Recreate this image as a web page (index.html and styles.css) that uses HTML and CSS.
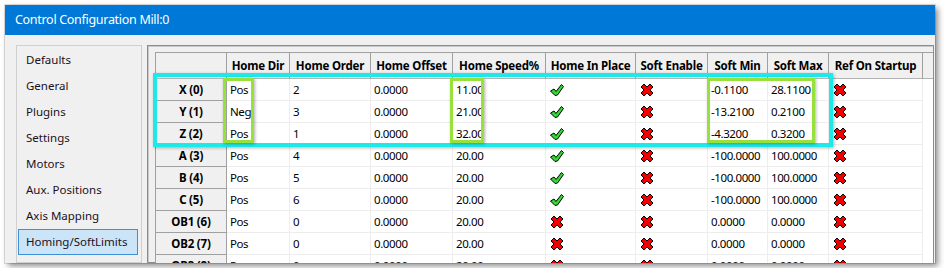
FILE: index.html
```html
<!DOCTYPE html>
<html>

<head>
    <link rel="stylesheet" href="styles.css">
</head>

<body>
    <svg class="defs" width="0" height="0">
        <symbol id="ok" viewBox="0 0 16 16">
            <path d="M1.5 9 L5 7 L7 9.5 L12.5 2.5 L14.5 4.5 L8.5 13 L6 13.5 Z" fill="#2ede2e" stroke="#000" stroke-width="1" stroke-linejoin="round"/>
        </symbol>
        <symbol id="no" viewBox="0 0 16 16">
            <path d="M2 5 L5 2 L8 5 L11 2 L14 5 L11 8 L14 11 L11 14 L8 11 L5 14 L2 11 L5 8 Z" fill="#f20000" stroke="#000" stroke-width="1" stroke-linejoin="round"/>
        </symbol>
    </svg>

    <div class="window">
        <div class="titlebar">Control Configuration Mill:0</div>
        <div class="content">
            <ul class="nav">
                <li>Defaults</li>
                <li>General</li>
                <li>Plugins</li>
                <li>Settings</li>
                <li>Motors</li>
                <li>Aux. Positions</li>
                <li>Axis Mapping</li>
                <li class="selected">Homing/SoftLimits</li>
                <li>Input Signals</li>
            </ul>
            <div class="panel">
                <table class="grid">
                    <colgroup>
                        <col class="c-axis">
                        <col class="c-dir">
                        <col class="c-order">
                        <col class="c-offset">
                        <col class="c-speed">
                        <col class="c-inplace">
                        <col class="c-enable">
                        <col class="c-min">
                        <col class="c-max">
                        <col class="c-ref">
                        <col>
                    </colgroup>
                    <tr>
                        <th></th>
                        <th>Home Dir</th>
                        <th>Home Order</th>
                        <th>Home Offset</th>
                        <th>Home Speed%</th>
                        <th>Home In Place</th>
                        <th>Soft Enable</th>
                        <th>Soft Min</th>
                        <th>Soft Max</th>
                        <th>Ref On Startup</th>
                        <th class="fill"></th>
                    </tr>
                    <tr>
                        <th class="axis">X (0)</th>
                        <td>Pos</td><td>2</td><td>0.0000</td><td>11.00</td>
                        <td><svg class="icon"><use href="#ok"/></svg></td>
                        <td><svg class="icon"><use href="#no"/></svg></td>
                        <td>-0.1100</td><td>28.1100</td>
                        <td><svg class="icon"><use href="#no"/></svg></td>
                        <td class="fill"></td>
                    </tr>
                    <tr>
                        <th class="axis">Y (1)</th>
                        <td>Neg</td><td>3</td><td>0.0000</td><td>21.00</td>
                        <td><svg class="icon"><use href="#ok"/></svg></td>
                        <td><svg class="icon"><use href="#no"/></svg></td>
                        <td>-13.2100</td><td>0.2100</td>
                        <td><svg class="icon"><use href="#no"/></svg></td>
                        <td class="fill"></td>
                    </tr>
                    <tr>
                        <th class="axis">Z (2)</th>
                        <td>Pos</td><td>1</td><td>0.0000</td><td>32.00</td>
                        <td><svg class="icon"><use href="#ok"/></svg></td>
                        <td><svg class="icon"><use href="#no"/></svg></td>
                        <td>-4.3200</td><td>0.3200</td>
                        <td><svg class="icon"><use href="#no"/></svg></td>
                        <td class="fill"></td>
                    </tr>
                    <tr>
                        <th class="axis">A (3)</th>
                        <td>Pos</td><td>4</td><td>0.0000</td><td>20.00</td>
                        <td><svg class="icon"><use href="#ok"/></svg></td>
                        <td><svg class="icon"><use href="#no"/></svg></td>
                        <td>-100.0000</td><td>100.0000</td>
                        <td><svg class="icon"><use href="#no"/></svg></td>
                        <td class="fill"></td>
                    </tr>
                    <tr>
                        <th class="axis">B (4)</th>
                        <td>Pos</td><td>5</td><td>0.0000</td><td>20.00</td>
                        <td><svg class="icon"><use href="#ok"/></svg></td>
                        <td><svg class="icon"><use href="#no"/></svg></td>
                        <td>-100.0000</td><td>100.0000</td>
                        <td><svg class="icon"><use href="#no"/></svg></td>
                        <td class="fill"></td>
                    </tr>
                    <tr>
                        <th class="axis">C (5)</th>
                        <td>Pos</td><td>6</td><td>0.0000</td><td>20.00</td>
                        <td><svg class="icon"><use href="#ok"/></svg></td>
                        <td><svg class="icon"><use href="#no"/></svg></td>
                        <td>-100.0000</td><td>100.0000</td>
                        <td><svg class="icon"><use href="#no"/></svg></td>
                        <td class="fill"></td>
                    </tr>
                    <tr>
                        <th class="axis">OB1 (6)</th>
                        <td>Pos</td><td>0</td><td>0.0000</td><td>20.00</td>
                        <td><svg class="icon"><use href="#no"/></svg></td>
                        <td><svg class="icon"><use href="#no"/></svg></td>
                        <td>0.0000</td><td>0.0000</td>
                        <td><svg class="icon"><use href="#no"/></svg></td>
                        <td class="fill"></td>
                    </tr>
                    <tr>
                        <th class="axis">OB2 (7)</th>
                        <td>Pos</td><td>0</td><td>0.0000</td><td>20.00</td>
                        <td><svg class="icon"><use href="#no"/></svg></td>
                        <td><svg class="icon"><use href="#no"/></svg></td>
                        <td>0.0000</td><td>0.0000</td>
                        <td><svg class="icon"><use href="#no"/></svg></td>
                        <td class="fill"></td>
                    </tr>
                    <tr>
                        <th class="axis">OB3 (8)</th>
                        <td>Pos</td><td>0</td><td>0.0000</td><td>20.00</td>
                        <td><svg class="icon"><use href="#no"/></svg></td>
                        <td><svg class="icon"><use href="#no"/></svg></td>
                        <td>0.0000</td><td>0.0000</td>
                        <td><svg class="icon"><use href="#no"/></svg></td>
                        <td class="fill"></td>
                    </tr>
                </table>
            </div>
        </div>
    </div>

    <!-- annotation boxes drawn over the screenshot -->
    <div class="mark mark-rows"></div>
    <div class="mark mark-dir"></div>
    <div class="mark mark-speed"></div>
    <div class="mark mark-limits"></div>
</body>

</html>
```

FILE: styles.css
```css
body {
    margin: 0;
    background-color: white;
    font-family: "Noto Sans", "Open Sans", sans-serif;
    font-size: 11.5px;
    color: #000;
}

.defs {
    position: absolute;
}

.window {
    margin: 5px;
    width: 930px;
    height: 258px;
    background-color: #f0f0f0;
    overflow: hidden;
    display: flex;
    flex-direction: column;
    box-shadow: 0 0 0 1px rgba(0, 0, 0, 0.12), 3px 3px 6px rgba(0, 0, 0, 0.45);
}

.titlebar {
    height: 30px;
    line-height: 30px;
    flex: none;
    padding-left: 10px;
    background-color: #0078d7;
    color: white;
    font-size: 12.5px;
    letter-spacing: -0.3px;
}

.content {
    display: flex;
    gap: 5px;
    padding: 10px 1px 0 11px;
    flex: 1;
    min-height: 0;
}

.nav {
    list-style: none;
    margin: 0;
    padding: 1px 3px 0 1px;
    width: 120px;
    border: 1px solid #cfcfcf;
    flex: none;
    color: #1a1020;
}

.nav li {
    height: 24px;
    line-height: 24px;
    padding-left: 7px;
    border: 1px solid transparent;
    white-space: nowrap;
}

.nav li.selected {
    background-color: #cce4f7;
    border-color: #3d8fd8;
}

.panel {
    flex: 1;
    border: 1px solid #8c8c8c;
    box-shadow: inset 1px 1px 0 #c8c8c8;
    padding: 6px 0 0 7px;
    min-width: 0;
}

.grid {
    width: 100%;
    table-layout: fixed;
    border-collapse: separate;
    border-spacing: 0;
    border-left: 1px solid #a0a0a0;
    border-top: 1px solid #a0a0a0;
    background-color: white;
}

.c-axis { width: 71px; }
.c-dir { width: 63px; }
.c-order { width: 81px; }
.c-offset { width: 82px; }
.c-speed { width: 93px; }
.c-inplace { width: 90px; }
.c-enable { width: 72px; }
.c-min { width: 60px; }
.c-max { width: 61px; }
.c-ref { width: 94px; }

.grid th {
    height: 25px;
    padding: 0;
    background-color: #f0f0f0;
    border-right: 1px solid #a0a0a0;
    border-bottom: 1px solid #b4b4b4;
    font-weight: bold;
    letter-spacing: -0.2px;
    text-align: center;
    white-space: nowrap;
    overflow: hidden;
}

.grid th.axis {
    height: 21px;
    border-bottom-color: #a0a0a0;
}

.grid th.fill {
    border-right: none;
}

.grid td {
    height: 21px;
    padding: 0 0 0 3px;
    border-right: 1px solid #ededed;
    border-bottom: 1px solid #ededed;
    letter-spacing: -0.4px;
    white-space: nowrap;
    overflow: hidden;
    vertical-align: middle;
}

.grid td.fill {
    border: none;
}

.icon {
    display: block;
    width: 16px;
    height: 16px;
}

.mark {
    position: absolute;
    box-sizing: border-box;
    box-shadow: 1px 1px 3px rgba(0, 0, 0, 0.3);
}

.mark-rows {
    left: 153px;
    top: 73px;
    width: 680px;
    height: 74px;
    border: 4px solid #1ee8e8;
}

.mark-dir,
.mark-speed,
.mark-limits {
    top: 78px;
    height: 65px;
    border: 3px solid #98e03c;
}

.mark-dir {
    left: 223px;
    width: 31px;
}

.mark-speed {
    left: 450px;
    width: 34px;
}

.mark-limits {
    left: 707px;
    width: 108px;
}
```
